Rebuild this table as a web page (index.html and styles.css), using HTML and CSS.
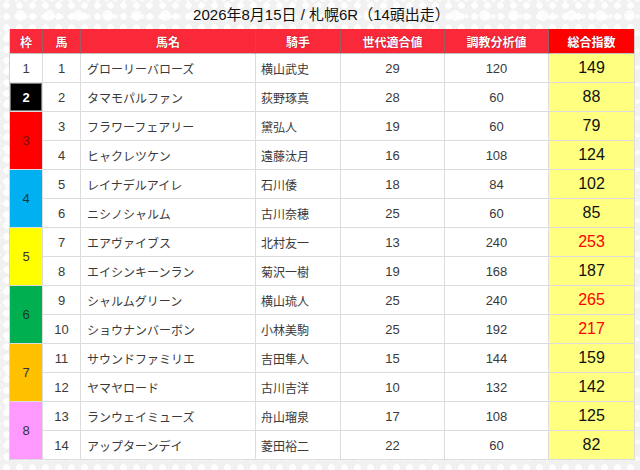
FILE: index.html
```html
<!DOCTYPE html>
<html lang="ja">
<head>
<meta charset="utf-8">
<title>札幌6R</title>
<link rel="stylesheet" href="styles.css">
</head>
<body>
<div class="page">
  <h1 class="title">2026年8月15日 / 札幌6R（14頭出走）</h1>
  <table class="race">
    <colgroup>
      <col class="c-waku"><col class="c-uma"><col class="c-name"><col class="c-jockey"><col class="c-sedai"><col class="c-chokyo"><col class="c-total">
    </colgroup>
    <thead>
      <tr>
        <th>枠</th><th>馬</th><th>馬名</th><th>騎手</th><th>世代適合値</th><th>調教分析値</th><th class="th-total">総合指数</th>
      </tr>
    </thead>
    <tbody>
      <tr><td class="waku w1">1</td><td class="num">1</td><td class="name">グローリーバローズ</td><td class="jockey">横山武史</td><td class="num">29</td><td class="num">120</td><td class="total">149</td></tr>
      <tr><td class="waku w2">2</td><td class="num">2</td><td class="name">タマモパルファン</td><td class="jockey">荻野琢真</td><td class="num">28</td><td class="num">60</td><td class="total">88</td></tr>
      <tr><td class="waku w3" rowspan="2">3</td><td class="num">3</td><td class="name">フラワーフェアリー</td><td class="jockey">黛弘人</td><td class="num">19</td><td class="num">60</td><td class="total">79</td></tr>
      <tr><td class="num">4</td><td class="name">ヒャクレツケン</td><td class="jockey">遠藤汰月</td><td class="num">16</td><td class="num">108</td><td class="total">124</td></tr>
      <tr><td class="waku w4" rowspan="2">4</td><td class="num">5</td><td class="name">レイナデルアイレ</td><td class="jockey">石川倭</td><td class="num">18</td><td class="num">84</td><td class="total">102</td></tr>
      <tr><td class="num">6</td><td class="name">ニシノシャルム</td><td class="jockey">古川奈穂</td><td class="num">25</td><td class="num">60</td><td class="total">85</td></tr>
      <tr><td class="waku w5" rowspan="2">5</td><td class="num">7</td><td class="name">エアヴァイブス</td><td class="jockey">北村友一</td><td class="num">13</td><td class="num">240</td><td class="total hot">253</td></tr>
      <tr><td class="num">8</td><td class="name">エイシンキーンラン</td><td class="jockey">菊沢一樹</td><td class="num">19</td><td class="num">168</td><td class="total">187</td></tr>
      <tr><td class="waku w6" rowspan="2">6</td><td class="num">9</td><td class="name">シャルムグリーン</td><td class="jockey">横山琉人</td><td class="num">25</td><td class="num">240</td><td class="total hot">265</td></tr>
      <tr><td class="num">10</td><td class="name">ショウナンバーボン</td><td class="jockey">小林美駒</td><td class="num">25</td><td class="num">192</td><td class="total hot">217</td></tr>
      <tr><td class="waku w7" rowspan="2">7</td><td class="num">11</td><td class="name">サウンドファミリエ</td><td class="jockey">吉田隼人</td><td class="num">15</td><td class="num">144</td><td class="total">159</td></tr>
      <tr><td class="num">12</td><td class="name">ヤマヤロード</td><td class="jockey">古川吉洋</td><td class="num">10</td><td class="num">132</td><td class="total">142</td></tr>
      <tr><td class="waku w8" rowspan="2">8</td><td class="num">13</td><td class="name">ランウェイミューズ</td><td class="jockey">舟山瑠泉</td><td class="num">17</td><td class="num">108</td><td class="total">125</td></tr>
      <tr><td class="num">14</td><td class="name">アップターンデイ</td><td class="jockey">菱田裕二</td><td class="num">22</td><td class="num">60</td><td class="total">82</td></tr>
    </tbody>
  </table>
</div>
</body>
</html>
```
FILE: styles.css
```css
html, body {
  margin: 0;
  padding: 0;
}
body {
  width: 640px;
  height: 470px;
  overflow: hidden;
  background-color: #f1f1f1;
  background-image:
    radial-gradient(circle at 50% 50%, rgba(255,255,255,0.95) 0, rgba(255,255,255,0.95) 3px, transparent 3.6px),
    radial-gradient(circle at 50% 50%, rgba(255,255,255,0.8) 0, rgba(255,255,255,0.8) 5px, transparent 5.6px),
    radial-gradient(circle at 50% 50%, rgba(255,255,255,0.7) 0, rgba(255,255,255,0.7) 2px, transparent 2.6px);
  background-size: 13px 11px, 29px 23px, 9px 17px;
  background-position: 0 0, 6px 4px, 3px 8px;
  font-family: "Liberation Sans", "Noto Sans CJK JP", sans-serif;
  color: #333;
}
.page {
  padding: 0 6px 0 9px;
}
.title {
  margin: 0;
  height: 29px;
  line-height: 30px;
  font-size: 15px;
  font-weight: normal;
  color: #111;
  text-align: center;
  letter-spacing: 0;
}
.race {
  width: 625px;
  table-layout: fixed;
  border-collapse: separate;
  border-spacing: 0;
  border-left: 1px solid #d4d4d4;
  background: #fff;
}
.c-waku { width: 33px; }
.c-uma { width: 38px; }
.c-name { width: 175px; }
.c-jockey { width: 85px; }
.c-sedai { width: 104px; }
.c-chokyo { width: 104px; }
.c-total { width: 86px; }

.race th {
  height: 24px;
  padding: 0;
  background: #f9293a;
  color: #fff;
  font-size: 12px;
  font-weight: bold;
  text-shadow: 0 0 1px #b0101c, 0 0 1px #b0101c;
  border-right: 1px solid #a05a60;
  border-bottom: 1px solid #c0c0c0;
  text-align: center;
  vertical-align: middle;
}
.race th:first-child {
  border-left: 0;
}
.race th.th-total {
  background: #ff0000;
  border-right: 1px solid #d0d0d0;
}
.race td {
  height: 28px;
  padding: 0;
  border-right: 1px solid #dcdcdc;
  border-bottom: 1px solid #dcdcdc;
  font-size: 13px;
  vertical-align: middle;
  color: #3a3a3a;
}
.num {
  text-align: center;
}
.name {
  text-align: left;
  padding-left: 6px !important;
  font-size: 12px !important;
  letter-spacing: 0;
}
.jockey {
  text-align: left;
  padding-left: 5px !important;
  font-size: 12px !important;
}
.total {
  background: #ffff80;
  text-align: center;
  font-size: 16px !important;
  color: #111 !important;
}
.total.hot {
  color: #ff0000 !important;
}
.waku {
  text-align: center;
  font-size: 13px;
}
.w1 { background: #fff; }
.w2 { background: #000; color: #fff !important; font-weight: bold; box-shadow: inset 0 0 0 1px #777; }
.w3 { background: #ff0000; color: #7a1010 !important; }
.w4 { background: #00b0f0; color: #16384a !important; }
.w5 { background: #ffff00; color: #333 !important; }
.w6 { background: #00b050; color: #1d3a26 !important; }
.w7 { background: #ffc000; color: #333 !important; }
.w8 { background: #ff99ff; color: #333 !important; }
```
